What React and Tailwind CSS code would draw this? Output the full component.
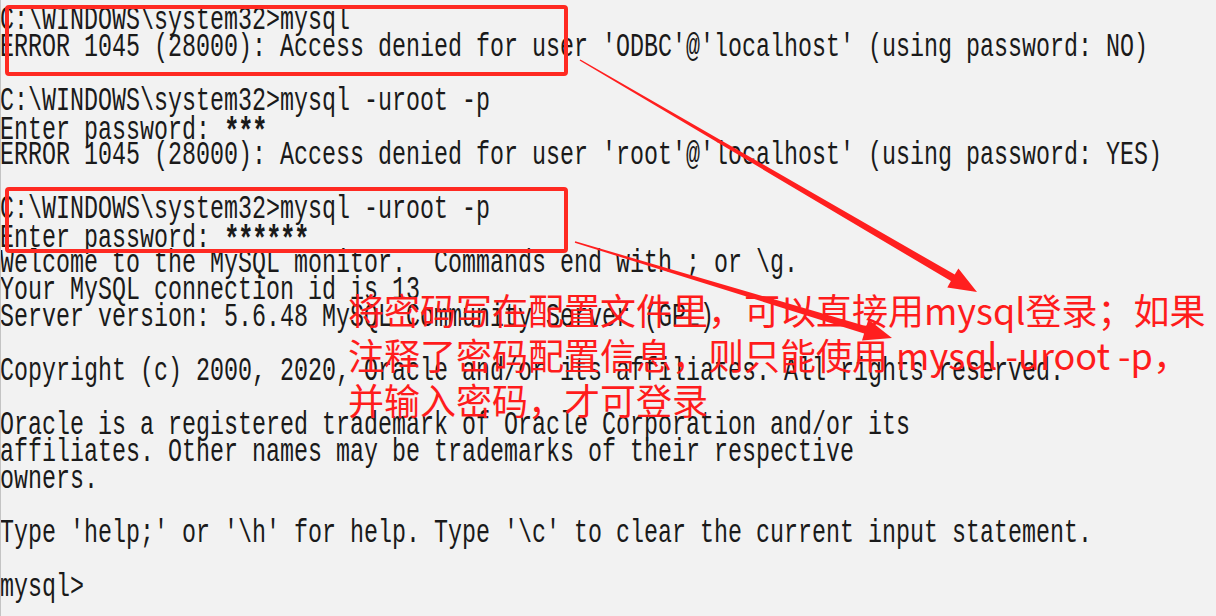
const lines = [
  'C:\\WINDOWS\\system32>mysql',
  "ERROR 1045 (28000): Access denied for user 'ODBC'@'localhost' (using password: NO)",
  '',
  'C:\\WINDOWS\\system32>mysql -uroot -p',
  'Enter password: ***',
  "ERROR 1045 (28000): Access denied for user 'root'@'localhost' (using password: YES)",
  '',
  'C:\\WINDOWS\\system32>mysql -uroot -p',
  'Enter password: ******',
  'Welcome to the MySQL monitor.  Commands end with ; or \\g.',
  'Your MySQL connection id is 13',
  'Server version: 5.6.48 MySQL Community Server (GPL)',
  '',
  'Copyright (c) 2000, 2020, Oracle and/or its affiliates. All rights reserved.',
  '',
  'Oracle is a registered trademark of Oracle Corporation and/or its',
  'affiliates. Other names may be trademarks of their respective',
  'owners.',
  '',
  "Type 'help;' or '\\h' for help. Type '\\c' to clear the current input statement.",
  '',
  'mysql>',
]

// tapered arrow: thin tail, thick end, triangular head
function arrowPoints([sx, sy], [tx, ty]) {
  const len = Math.hypot(tx - sx, ty - sy)
  const dx = (tx - sx) / len
  const dy = (ty - sy) / len
  const nx = -dy
  const ny = dx
  const headLen = 28
  const headW = 22
  const w0 = 1.5
  const w1 = 7.5
  const bx = tx - dx * headLen
  const by = ty - dy * headLen
  const pts = [
    [sx + (nx * w0) / 2, sy + (ny * w0) / 2],
    [bx + (nx * w1) / 2, by + (ny * w1) / 2],
    [bx + (nx * headW) / 2, by + (ny * headW) / 2],
    [tx, ty],
    [bx - (nx * headW) / 2, by - (ny * headW) / 2],
    [bx - (nx * w1) / 2, by - (ny * w1) / 2],
    [sx - (nx * w0) / 2, sy - (ny * w0) / 2],
  ]
  return pts.map((p) => p.map((v) => v.toFixed(1)).join(',')).join(' ')
}

function Line({ text }) {
  const m = text.match(/^(Enter password: )(\*+)$/)
  return (
    <div className="h-[27px] whitespace-pre scale-y-[1.45]">
      {m ? (
        <>
          {m[1]}
          {m[2].split('').map((c, i) => (
            <span key={i} className="inline-block w-[14px] text-center font-bold text-[26px] translate-y-[3px]">
              {c}
            </span>
          ))}
        </>
      ) : (
        text || ' '
      )}
    </div>
  )
}

export default function App() {
  return (
    <div className="relative w-[1216px] h-[616px] overflow-hidden bg-[#f2f2f2] border-l border-[#c4c4c4]">
      <div className="ml-[-1px] pt-[8px] font-['Liberation_Mono',monospace] text-[23.33px] leading-[27px] text-[#1a1a1a]">
        {lines.map((l, i) => (
          <Line key={i} text={l} />
        ))}
      </div>

      <div className="absolute left-[4px] top-[5px] w-[563px] h-[71px] border-4 border-[#ff2a22] rounded-[4px]" />
      <div className="absolute left-[4px] top-[187px] w-[563px] h-[66px] border-4 border-[#ff2a22] rounded-[4px]" />

      <div className="absolute left-[347px] top-[287px] font-['Noto_Sans_CJK_SC',sans-serif] text-[36px] leading-[45px] text-[#ff1c1c] whitespace-nowrap">
        <div>将密码写在配置文件里，可以直接用mysql登录；如果</div>
        <div>注释了密码配置信息，则只能使用 mysql -uroot -p，</div>
        <div>并输入密码，才可登录</div>
      </div>

      <svg className="absolute inset-0" width="1216" height="616" viewBox="0 0 1216 616">
        <polygon points={arrowPoints([579, 60], [976, 292])} fill="#ff1f1f" />
        <polygon points={arrowPoints([574, 242], [891, 338])} fill="#ff1f1f" />
      </svg>
    </div>
  )
}
